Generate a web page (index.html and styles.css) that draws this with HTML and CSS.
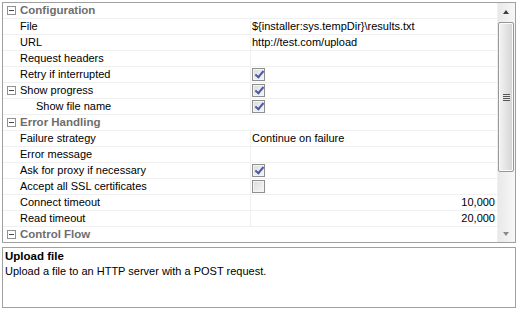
FILE: index.html
```html
<!DOCTYPE html>
<html lang="en">
<head>
  <meta charset="UTF-8" />
  <title>Upload file</title>
  <link rel="stylesheet" href="styles.css">
</head>
<body>
  <!-- Property grid -->
  <div class="grid-panel">
    <div class="props">
      <div class="cat"><span class="toggle"></span>Configuration</div>
      <div class="row"><div class="name">File</div><div class="value">${installer:sys.tempDir}\results.txt</div></div>
      <div class="row"><div class="name">URL</div><div class="value">http://test.com/upload</div></div>
      <div class="row"><div class="name">Request headers</div><div class="value"></div></div>
      <div class="row"><div class="name">Retry if interrupted</div><div class="value"><span class="check on"></span></div></div>
      <div class="row"><div class="name"><span class="toggle"></span>Show progress</div><div class="value"><span class="check on"></span></div></div>
      <div class="row"><div class="name sub">Show file name</div><div class="value"><span class="check on"></span></div></div>

      <div class="cat"><span class="toggle"></span>Error Handling</div>
      <div class="row"><div class="name">Failure strategy</div><div class="value">Continue on failure</div></div>
      <div class="row"><div class="name">Error message</div><div class="value"></div></div>
      <div class="row"><div class="name">Ask for proxy if necessary</div><div class="value"><span class="check on"></span></div></div>
      <div class="row"><div class="name">Accept all SSL certificates</div><div class="value"><span class="check"></span></div></div>
      <div class="row"><div class="name">Connect timeout</div><div class="value num">10,000</div></div>
      <div class="row"><div class="name">Read timeout</div><div class="value num">20,000</div></div>

      <div class="cat"><span class="toggle"></span>Control Flow</div>
    </div>

    <div class="scrollbar">
      <div class="arrow up"></div>
      <div class="track">
        <div class="thumb"><span class="grip"></span></div>
      </div>
      <div class="arrow down"></div>
    </div>
  </div>

  <!-- Help text -->
  <div class="help">
    <div class="help-title">Upload file</div>
    <div>Upload a file to an HTTP server with a POST request.</div>
  </div>
</body>
</html>
```

FILE: styles.css
```css
body {
  font-family: 'Liberation Sans', Arial, sans-serif;
  font-size: 11px;
  color: #000;
  background-color: #fff;
  margin: 2px 5px 0 2px;
}

.grid-panel {
  display: flex;
  height: 239px;
  border: 1px solid #a0a0a0;
  overflow: hidden;
}

.props {
  flex: 1;
  display: flex;
  flex-direction: column;
}

.cat,
.row {
  height: 15px;
  line-height: 15px;
  border-bottom: 1px solid #f0f0f0;
  flex-shrink: 0;
}

.cat {
  display: flex;
  align-items: center;
  padding-left: 4px;
  font-weight: bold;
  font-size: 11.5px;
  color: #6e6e6e;
}

.row {
  display: flex;
}

.name {
  width: 230px;
  padding-left: 17px;
  border-right: 1px solid #f0f0f0;
  display: flex;
  align-items: center;
  position: relative;
  white-space: nowrap;
}

.name.sub {
  padding-left: 33px;
  width: 214px;
}

.name .toggle {
  position: absolute;
  left: 4px;
  top: 3px;
}

.value {
  flex: 1;
  padding-left: 1px;
  padding-right: 2px;
  display: flex;
  align-items: center;
  white-space: nowrap;
}

.value.num {
  justify-content: flex-end;
}

/* Plus / minus box */
.toggle {
  width: 7px;
  height: 7px;
  border: 1px solid #919191;
  margin-right: 4px;
  position: relative;
  background-color: #fff;
  flex-shrink: 0;
}

.toggle::after {
  content: "";
  position: absolute;
  left: 1px;
  top: 3px;
  width: 5px;
  height: 1px;
  background-color: #4a4a4a;
}

/* Checkboxes */
.check {
  width: 11px;
  height: 11px;
  border: 1px solid #8e8f8f;
  background: linear-gradient(135deg, #dcdcdc, #f6f6f6);
  position: relative;
  box-shadow: inset 0 0 0 1px #f4f4f4;
}

.check.on::after {
  content: "";
  position: absolute;
  left: 4px;
  top: 0px;
  width: 3px;
  height: 7px;
  border-right: 2px solid #4a5aa8;
  border-bottom: 2px solid #4a5aa8;
  transform: rotate(40deg);
}

/* Scrollbar */
.scrollbar {
  width: 17px;
  display: flex;
  flex-direction: column;
  background: linear-gradient(to right, #e9e9e9, #f7f7f7);
  border-left: 1px solid #f0f0f0;
}

.arrow {
  height: 17px;
  position: relative;
  flex-shrink: 0;
}

.arrow::after {
  content: "";
  position: absolute;
  left: 5px;
  border-left: 3px solid transparent;
  border-right: 3px solid transparent;
}

.arrow.up::after {
  top: 7px;
  border-bottom: 4px solid #404040;
}

.arrow.down::after {
  top: 7px;
  border-top: 4px solid #8a8a8a;
}

.track {
  flex: 1;
  padding: 2px 0 0 0;
}

.thumb {
  height: 148px;
  margin: 0 1px 0 0;
  border: 1px solid #979797;
  border-radius: 2px;
  background: linear-gradient(to right, #f3f3f3 0%, #e4e4e4 50%, #d4d4d4 100%);
  box-shadow: inset 0 0 0 1px #fafafa;
  display: flex;
  align-items: center;
  justify-content: center;
}

.grip {
  width: 7px;
  height: 7px;
  background: repeating-linear-gradient(to bottom, #555 0, #555 1px, #e8e8e8 1px, #e8e8e8 2px);
}

/* Help panel */
.help {
  margin-top: 4px;
  height: 57px;
  border: 1px solid #a0a0a0;
  padding: 1px 2px;
  line-height: 15px;
}

.help-title {
  font-weight: bold;
  font-size: 11.5px;
}
```
